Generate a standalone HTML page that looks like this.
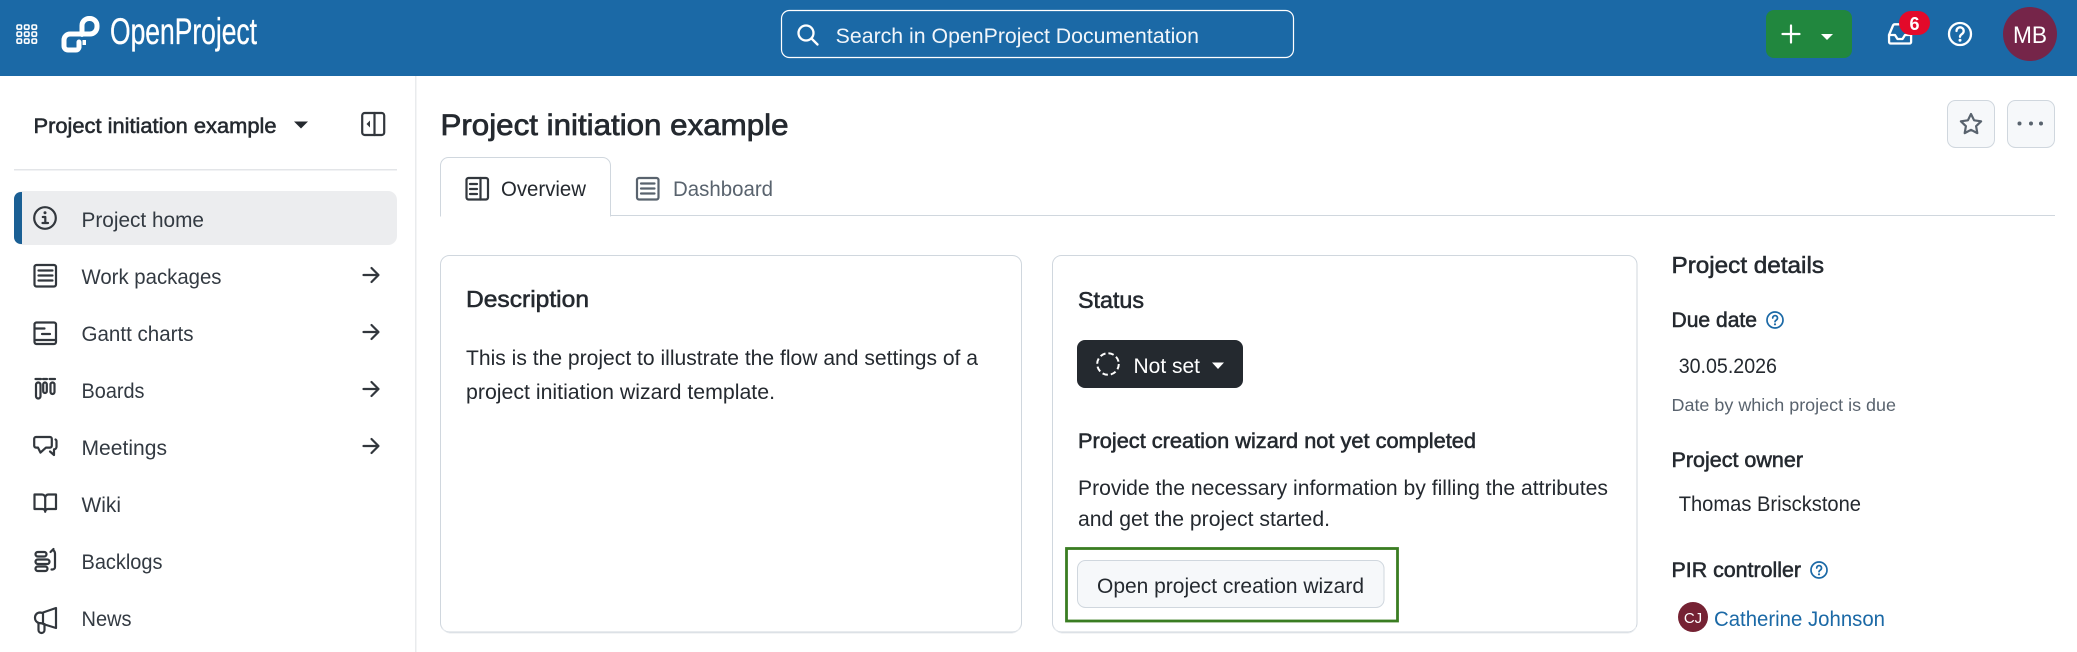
<!DOCTYPE html>
<html lang="en"><head><meta charset="utf-8"><title>Project initiation example</title>
<style>
html,body{margin:0;padding:0;background:#fff;width:2077px;height:652px;overflow:hidden}
svg{display:block}
text{font-family:"Liberation Sans",sans-serif;fill:#24292f;font-size:21px}
.b{stroke:#24292f;stroke-width:.55px;paint-order:stroke}
.n{fill:#333a42}
.i{fill:none;stroke:#32373d;stroke-width:2.2;stroke-linecap:round;stroke-linejoin:round}
.w{fill:none;stroke:#fff;stroke-width:2.3;stroke-linecap:round;stroke-linejoin:round}
</style></head><body>
<svg xmlns="http://www.w3.org/2000/svg" width="2077" height="652" viewBox="0 0 2077 652">
<rect width="2077" height="76" fill="#1b69a6"/>
<!-- grid -->
<g fill="none" stroke="#fff" stroke-width="1.6">
<rect x="17" y="25" width="4.5" height="4.2" rx="1.2"/><rect x="24.5" y="25" width="4.5" height="4.2" rx="1.2"/><rect x="32" y="25" width="4.5" height="4.2" rx="1.2"/>
<rect x="17" y="32" width="4.5" height="4.2" rx="1.2"/><rect x="24.5" y="32" width="4.5" height="4.2" rx="1.2"/><rect x="32" y="32" width="4.5" height="4.2" rx="1.2"/>
<rect x="17" y="39" width="4.5" height="4.2" rx="1.2"/><rect x="24.5" y="39" width="4.5" height="4.2" rx="1.2"/><rect x="32" y="39" width="4.5" height="4.2" rx="1.2"/>
</g>
<!-- logo -->
<path d="M79 42v5.5a3 3 0 0 1-3 2.500H68a4 4 0 0 1-4-4v-6a6 6 0 0 1 6-6h20a7 7 0 0 0 7-7v-1.500a7 7 0 0 0-7-7h-1a7 7 0 0 0-7 7v9" fill="none" stroke="#fff" stroke-width="5" stroke-linecap="round"/>
<rect x="82.500" y="40" width="3.500" height="5" fill="#fff"/>
<text x="110" y="44" textLength="147" lengthAdjust="spacingAndGlyphs" style="fill:#fff;font-size:37px;stroke:#fff;stroke-width:.35px">OpenProject</text>
<!-- search -->
<rect x="781.500" y="10.500" width="512" height="47" rx="8" fill="none" stroke="#fff" stroke-width="1.200"/>
<circle cx="806" cy="33" r="7.500" class="w"/><path d="M811.500 38.500l6 6" class="w"/>
<text x="835.700" y="43" textLength="363.300" lengthAdjust="spacingAndGlyphs" style="fill:#f2f6fa">Search in OpenProject Documentation</text>
<!-- green -->
<rect x="1766" y="10" width="86" height="48" rx="8" fill="#21873e"/>
<path d="M1791 25.500v17M1782.500 34h17" stroke="#fff" stroke-width="2.200" stroke-linecap="round"/>
<path d="M1821 34h12l-6 6z" fill="#fff"/>
<!-- inbox -->
<path d="M1889 35l4-9.500a2 2 0 0 1 1.800-1.200h9.500a2 2 0 0 1 1.800 1.200l5 9.500v7a1.500 1.500 0 0 1-1.500 1.500h-19a1.500 1.500 0 0 1-1.500-1.500zM1889 35h6l2.500 4h5l2.500-4h6" class="w"/>
<rect x="1899" y="11" width="31" height="24" rx="12" fill="#e30a2a"/>
<text x="1914.500" y="30" text-anchor="middle" style="fill:#fff;font-size:18px;font-weight:700">6</text>
<!-- help -->
<circle cx="1960" cy="34" r="11" class="w"/>
<path d="M1956.500 31a3.600 3.600 0 1 1 5.500 3c-1.300.8-2 1.400-2 2.800" class="w"/>
<circle cx="1960" cy="40.200" r="1.500" fill="#fff"/>
<!-- avatar -->
<circle cx="2030" cy="34" r="27" fill="#752549"/>
<text x="2013" y="43" textLength="34" lengthAdjust="spacingAndGlyphs" style="fill:#fff;font-size:24px">MB</text>

<!-- sidebar -->
<rect x="415" y="76" width="1.500" height="576" fill="#e9ebed"/>
<text x="33.500" y="133" class="b" textLength="243" lengthAdjust="spacingAndGlyphs" style="font-size:21px">Project initiation example</text>
<path d="M294 121.500h14l-7 7z" fill="#24292f"/>
<rect x="362.200" y="113" width="22" height="22" rx="2.500" class="i"/>
<path d="M374.500 113v22" class="i"/><path d="M370 120.500v7l-3.500-3.500z" fill="#32373d"/>
<rect x="14" y="169" width="383" height="1.500" fill="#e3e5e8"/>
<rect x="14" y="191" width="383" height="54" rx="9" fill="#ecedef"/>
<path d="M22 192v52h-1c-4 0-7-3-7-7v-38c0-4 3-7 7-7z" fill="#1a5f94"/>
<!-- project home -->
<circle cx="45" cy="218" r="10.800" class="i"/>
<circle cx="45" cy="212.800" r="1.500" fill="#32373d"/>
<path d="M42.800 217h2.500v6M42.500 223h5.500" class="i" stroke-width="1.900"/>
<text x="81.500" y="227" class="n" textLength="122.500" lengthAdjust="spacingAndGlyphs">Project home</text>
<!-- work packages -->
<rect x="34.500" y="265" width="21.500" height="21.500" rx="2" class="i"/>
<path d="M38.500 270.500h14M38.500 275.500h14M38.500 280.500h14" class="i" stroke-width="2" stroke-linecap="butt"/>
<text x="81.500" y="284" class="n" textLength="140" lengthAdjust="spacingAndGlyphs">Work packages</text>
<!-- gantt -->
<rect x="34.500" y="322.500" width="21.500" height="21.500" rx="2" class="i"/>
<path d="M35 328.500h9.500M42 334h8M36 340h19" class="i" stroke-width="2" stroke-linecap="butt"/>
<text x="81.500" y="341" class="n" textLength="112" lengthAdjust="spacingAndGlyphs">Gantt charts</text>
<!-- boards -->
<path d="M35.500 379h5.500M43 379h4M49.500 379h5.500" class="i" stroke-width="1.800"/>
<rect x="36" y="382.500" width="4.500" height="16" rx="2.200" class="i" stroke-width="1.900"/>
<rect x="43.200" y="382.500" width="3.600" height="10.500" rx="1.800" class="i" stroke-width="1.900"/>
<rect x="50.500" y="382.500" width="4" height="11.500" rx="2" class="i" stroke-width="1.900"/>
<text x="81.500" y="398" class="n" textLength="63" lengthAdjust="spacingAndGlyphs">Boards</text>
<!-- meetings -->
<path d="M36 437h14a1.800 1.800 0 0 1 1.800 1.800v7a1.800 1.800 0 0 1-1.800 1.800h-4l-5.500 5-2.500-5h-2a1.800 1.800 0 0 1-1.800-1.800v-7a1.800 1.800 0 0 1 1.800-1.800z" class="i"/>
<path d="M55.500 439.500c.8.400 1 1 1 1.800v5.500a2.500 2.500 0 0 1-2.500 2.500v5.700l-4-3.500" class="i"/>
<text x="81.500" y="455" class="n" textLength="85.500" lengthAdjust="spacingAndGlyphs">Meetings</text>
<!-- wiki -->
<path d="M34.500 494.500h7.500a3.200 3.200 0 0 1 3.200 3.200V511M56 494.500h-7.500a3.200 3.200 0 0 0-3.300 3.200M34.500 494.500v14.500h8a2.800 2.800 0 0 1 2.700 2.800 2.800 2.800 0 0 1 2.800-2.800h8v-14.500" class="i"/>
<text x="81.500" y="512" class="n" textLength="39.500" lengthAdjust="spacingAndGlyphs">Wiki</text>
<!-- backlogs -->
<rect x="35.500" y="552" width="11" height="4.500" rx="2.200" class="i" stroke-width="1.900"/>
<rect x="35.500" y="559.500" width="14" height="4.500" rx="2.200" class="i" stroke-width="1.900"/>
<rect x="35.500" y="566.500" width="12" height="4.500" rx="2.200" class="i" stroke-width="1.900"/>
<path d="M50.500 552l3-3M53 550c1.500 1 2 2 2 3.500V567a2.500 2.500 0 0 1-2.500 2.500h-1" class="i" stroke-width="1.900"/>
<text x="81.500" y="569" class="n" textLength="81" lengthAdjust="spacingAndGlyphs">Backlogs</text>
<!-- news -->
<path d="M40 612.500a5 5 0 0 0-5 5v.500a5 5 0 0 0 4 5l4 .500V613zM43 612.500l13-4.500v20l-13-4" class="i"/>
<path d="M38.500 623v7a3 3 0 0 0 3 3h0a3 3 0 0 0 3-3v-6" class="i"/>
<text x="81.500" y="626" class="n" textLength="50" lengthAdjust="spacingAndGlyphs">News</text>
<!-- arrows -->
<g class="i" stroke-width="2"><path d="M363.500 275h14.500M371.500 268l7 7-7 7"/><path d="M363.500 332h14.500M371.500 325l7 7-7 7"/><path d="M363.500 389h14.500M371.500 382l7 7-7 7"/><path d="M363.500 446h14.500M371.500 439l7 7-7 7"/></g>

<!-- title -->
<text x="440.500" y="135" class="b" textLength="348" lengthAdjust="spacingAndGlyphs" style="font-size:30px;stroke-width:.75px">Project initiation example</text>
<!-- action buttons -->
<rect x="1947.500" y="100.500" width="47" height="47" rx="8" fill="#f6f8fa" stroke="#d0d7de" stroke-width="1"/>
<rect x="2007.500" y="100.500" width="47" height="47" rx="8" fill="#f6f8fa" stroke="#d0d7de" stroke-width="1"/>
<path d="M1971 114l3.100 6.300 7 1-5 4.900 1.200 6.900-6.300-3.300-6.300 3.300 1.200-6.900-5-4.900 7-1z" fill="none" stroke="#59636e" stroke-width="2.200" stroke-linejoin="round"/>
<circle cx="2019.500" cy="123.500" r="2" fill="#59636e"/><circle cx="2031" cy="123.500" r="2" fill="#59636e"/><circle cx="2041" cy="123.500" r="2" fill="#59636e"/>
<!-- tabs -->
<path d="M440.500 215.500H2055" stroke="#d0d7de" stroke-width="1"/>
<path d="M440.500 216.500v-51a8 8 0 0 1 8-8h154a8 8 0 0 1 8 8v51" fill="#fff" stroke="#d0d7de" stroke-width="1"/>
<rect x="441" y="214" width="169" height="3" fill="#fff"/>
<rect x="466.500" y="178" width="21.500" height="21.500" rx="2" class="i"/>
<path d="M480.500 178v21.500M470 184h7M470 189h7M470 194h7" class="i" stroke-width="2" stroke-linecap="butt"/>
<text x="501" y="196" textLength="85" lengthAdjust="spacingAndGlyphs">Overview</text>
<rect x="637" y="178" width="21.500" height="21.500" rx="2" class="i" style="stroke:#59636e"/>
<path d="M641 183.500h13.500M641 188.500h13.500M641 193.500h13.500" class="i" style="stroke:#59636e" stroke-width="2" stroke-linecap="butt"/>
<text x="673" y="196" textLength="100" lengthAdjust="spacingAndGlyphs" style="fill:#59636e">Dashboard</text>

<!-- cards -->
<rect x="440.500" y="255.500" width="581" height="376.500" rx="9" fill="#fff" stroke="#d0d7de" stroke-width="1"/>
<path d="M442 627a9 9 0 0 0 8 6h562a9 9 0 0 0 8-6" fill="none" stroke="#e8ebee" stroke-width="1"/>
<text x="466" y="307" class="b" textLength="123" lengthAdjust="spacingAndGlyphs" style="font-size:23px">Description</text>
<text x="466" y="365" textLength="512" lengthAdjust="spacingAndGlyphs">This is the project to illustrate the flow and settings of a</text>
<text x="466" y="399" textLength="309" lengthAdjust="spacingAndGlyphs">project initiation wizard template.</text>

<rect x="1052.500" y="255.500" width="584.500" height="376.500" rx="9" fill="#fff" stroke="#d0d7de" stroke-width="1"/>
<path d="M1054 627a9 9 0 0 0 8 6h566a9 9 0 0 0 8-6" fill="none" stroke="#e8ebee" stroke-width="1"/>
<text x="1078" y="308" class="b" textLength="66" lengthAdjust="spacingAndGlyphs" style="font-size:23px">Status</text>
<rect x="1077" y="340" width="166" height="48" rx="8" fill="#24292f"/>
<circle cx="1108" cy="364" r="10.800" fill="none" stroke="#fff" stroke-width="2" stroke-dasharray="5.500 3"/>
<text x="1133.500" y="373" textLength="66.500" lengthAdjust="spacingAndGlyphs" style="fill:#fff">Not set</text>
<path d="M1212 362.500h12l-6 6.500z" fill="#fff"/>
<text x="1078" y="448" class="b" textLength="398" lengthAdjust="spacingAndGlyphs" style="font-size:21px">Project creation wizard not yet completed</text>
<text x="1078" y="495" textLength="530" lengthAdjust="spacingAndGlyphs">Provide the necessary information by filling the attributes</text>
<text x="1078" y="526" textLength="252" lengthAdjust="spacingAndGlyphs">and get the project started.</text>
<rect x="1066.500" y="548.500" width="331" height="72.500" fill="none" stroke="#3a7d22" stroke-width="2.800"/>
<rect x="1077.500" y="560.500" width="306.500" height="47" rx="8" fill="#f6f8fa" stroke="#d0d7de" stroke-width="1"/>
<text x="1097" y="593" textLength="267" lengthAdjust="spacingAndGlyphs">Open project creation wizard</text>

<!-- details -->
<text x="1671.500" y="273" class="b" textLength="152.500" lengthAdjust="spacingAndGlyphs" style="font-size:23px">Project details</text>
<text x="1671.500" y="327" class="b" textLength="85.500" lengthAdjust="spacingAndGlyphs" style="font-size:21px">Due date</text>
<g fill="none" stroke="#1b69a6" stroke-width="1.700" stroke-linecap="round">
<circle cx="1775" cy="320" r="8"/><path d="M1772.700 318a2.400 2.400 0 1 1 3.700 2c-.9.600-1.400 1-1.400 1.800"/>
<circle cx="1819" cy="570" r="8"/><path d="M1816.700 568a2.400 2.400 0 1 1 3.700 2c-.9.600-1.400 1-1.400 1.800"/>
</g>
<circle cx="1775" cy="324.300" r="1.100" fill="#1b69a6"/><circle cx="1819" cy="574.300" r="1.100" fill="#1b69a6"/>
<text x="1678.700" y="373" textLength="98.300" lengthAdjust="spacingAndGlyphs">30.05.2026</text>
<text x="1671.500" y="411" textLength="224.500" lengthAdjust="spacingAndGlyphs" style="fill:#59636e;font-size:17.500px">Date by which project is due</text>
<text x="1671.500" y="467" class="b" textLength="131.500" lengthAdjust="spacingAndGlyphs" style="font-size:21px">Project owner</text>
<text x="1678.700" y="511" textLength="182.300" lengthAdjust="spacingAndGlyphs">Thomas Brisckstone</text>
<text x="1671.500" y="577" class="b" textLength="129.500" lengthAdjust="spacingAndGlyphs" style="font-size:21px">PIR controller</text>
<circle cx="1693" cy="617" r="15" fill="#752233"/>
<text x="1693" y="623" text-anchor="middle" style="fill:#fff;font-size:15px">CJ</text>
<text x="1714" y="626" textLength="171" lengthAdjust="spacingAndGlyphs" style="fill:#1b69a6">Catherine Johnson</text>
</svg>
</body></html>
